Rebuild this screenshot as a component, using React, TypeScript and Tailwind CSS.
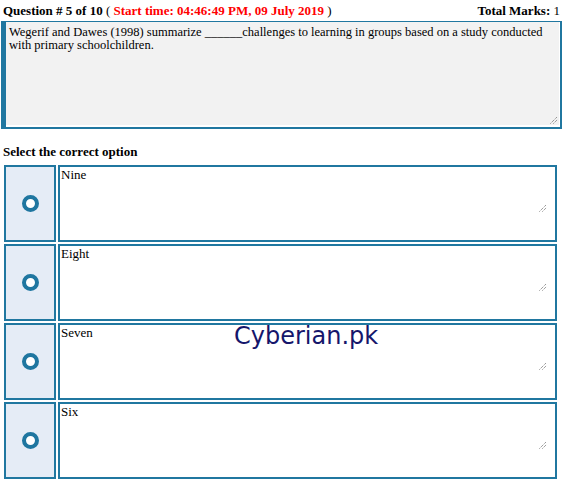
import React from "react";

function Grip() {
  return (
    <svg width="8" height="8" viewBox="0 0 8 8" className="absolute">
      <line x1="0.5" y1="7.5" x2="7.5" y2="0.5" stroke="#6b6b6b" strokeWidth="1" strokeDasharray="1 1" />
      <line x1="3.5" y1="7.5" x2="7.5" y2="3.5" stroke="#6b6b6b" strokeWidth="1" strokeDasharray="1 1" />
    </svg>
  );
}

function Option({ label }: { label: string }) {
  return (
    <div className="flex gap-[2px] h-[77px]">
      <div className="w-[52px] border-2 border-[#2077a0] bg-[#e5ecf6] flex items-center justify-center">
        <div className="w-[17px] h-[17px] rounded-full border-[4px] border-[#1f76a0] bg-white" />
      </div>
      <div className="w-[499px] border-2 border-[#2077a0] bg-white relative">
        <div className="pl-[1px] leading-[15px]">{label}</div>
        <div className="absolute right-[8px] top-[37px] w-[8px] h-[8px]">
          <Grip />
        </div>
      </div>
    </div>
  );
}

export default function App() {
  return (
    <div
      className="w-[563px] h-[483px] bg-white relative text-[13px] text-black overflow-hidden"
      style={{ fontFamily: "'Liberation Serif', 'Times New Roman', serif" }}
    >
      <div className="flex justify-between px-[3px] pt-[3px] h-[21px] leading-[15px]">
        <div>
          <span className="font-bold">Question # 5 of 10</span> ({" "}
          <span className="font-bold text-[#ff0000]">Start time: 04:46:49 PM, 09 July 2019</span> )
        </div>
        <div>
          <span className="font-bold">Total Marks:</span> 1
        </div>
      </div>
      <div className="ml-[1px] w-[561px] h-[108px] border-l-[5px] border-t border-r-2 border-b-2 border-[#2077a0] bg-white">
        <div className="mr-[1px] h-[103px] bg-[#f2f2f2] relative px-[3px] pt-[4px] text-[12.5px] leading-[13px]">
          Wegerif and Dawes (1998) summarize ______challenges to learning in groups based on a study conducted with primary schoolchildren.
          <div className="absolute right-[1px] bottom-[1px] w-[8px] h-[8px]">
            <Grip />
          </div>
        </div>
      </div>
      <div className="mt-[15px] px-[3px] font-bold leading-[15px]">Select the correct option</div>
      <div className="mt-[6px] pl-[4px] flex flex-col gap-[2px]">
        <Option label="Nine" />
        <Option label="Eight" />
        <Option label="Seven" />
        <Option label="Six" />
      </div>
      <div
        className="absolute left-[234px] top-[321px] text-[24px] leading-[30px] text-[#15166b]"
        style={{ fontFamily: "'DejaVu Sans', Verdana, sans-serif" }}
      >
        Cyberian.pk
      </div>
    </div>
  );
}
